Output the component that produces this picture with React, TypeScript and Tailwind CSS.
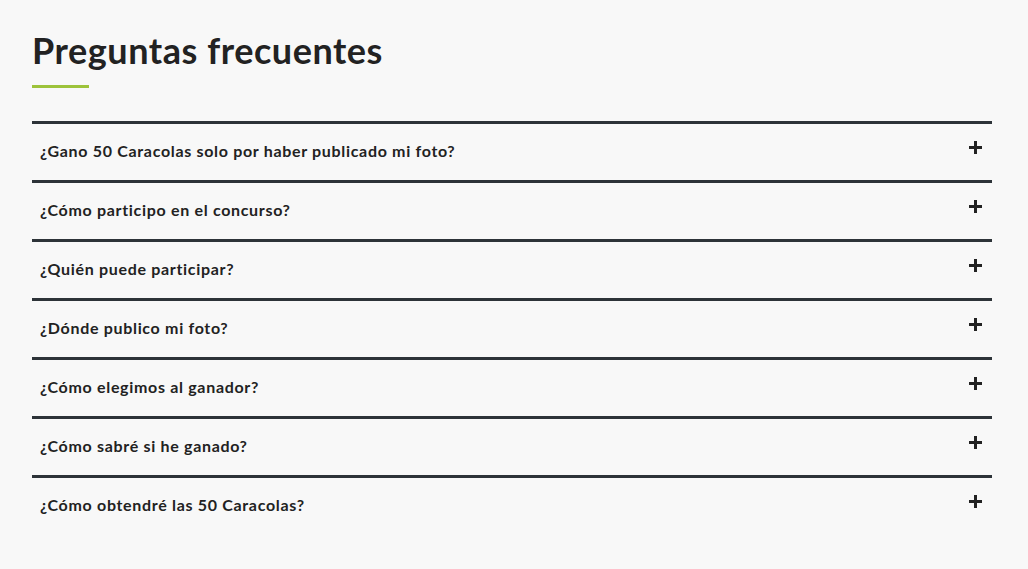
const preguntas = [
  "¿Gano 50 Caracolas solo por haber publicado mi foto?",
  "¿Cómo participo en el concurso?",
  "¿Quién puede participar?",
  "¿Dónde publico mi foto?",
  "¿Cómo elegimos al ganador?",
  "¿Cómo sabré si he ganado?",
  "¿Cómo obtendré las 50 Caracolas?",
];

function PlusIcon() {
  return (
    <svg width="13" height="13" viewBox="0 0 13 13" className="-mt-[7px] shrink-0">
      <rect x="5" y="0" width="3" height="13" fill="#222222" />
      <rect x="0" y="5" width="13" height="3" fill="#222222" />
    </svg>
  );
}

export default function App() {
  return (
    <div className="min-h-[569px] bg-[#f8f8f8] font-['Lato',sans-serif] text-[#222222]">
      <div className="mx-8 w-[960px] pt-[28px]">
        {/* Title */}
        <h2 className="text-[36px] leading-[45px] font-bold tracking-[0.55px]">Preguntas frecuentes</h2>
        <div className="mt-[12px] h-[3px] w-[57px] bg-[#9dc33b]" />

        {/* FAQ list */}
        <div className="mt-[33px]">
          {preguntas.map((q) => (
            <div key={q} className="border-t-[3px] border-[#2d3338]">
              <button className="flex h-[56px] w-full items-center justify-between pb-[3px] pl-2 pr-[10px] text-left">
                <span className="text-[16px] font-bold tracking-[0.68px]">{q}</span>
                <PlusIcon />
              </button>
            </div>
          ))}
        </div>
      </div>
    </div>
  );
}
